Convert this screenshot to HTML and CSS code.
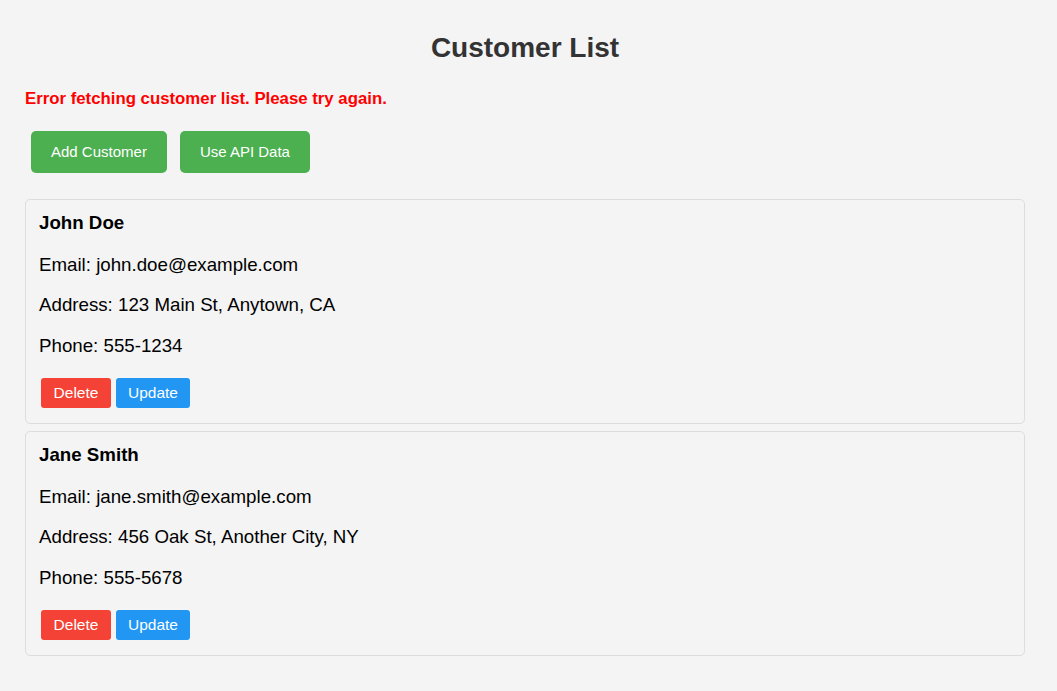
FILE: index.html
```html
<!DOCTYPE html>
<html lang="en">
<head>
<meta charset="utf-8">
<title>Customer List</title>
<link rel="stylesheet" href="styles.css">
</head>
<body>
<div class="app">
  <h1 class="title">Customer List</h1>
  <p class="error">Error fetching customer list. Please try again.</p>
  <div class="actions">
    <button class="btn btn-green">Add Customer</button>
    <button class="btn btn-green">Use API Data</button>
  </div>
  <ul class="list">
    <li class="card">
      <h3 class="name">John Doe</h3>
      <p class="field">Email: john.doe@example.com</p>
      <p class="field">Address: 123 Main St, Anytown, CA</p>
      <p class="field">Phone: 555-1234</p>
      <div class="card-actions">
        <button class="sbtn sbtn-red">Delete</button>
        <button class="sbtn sbtn-blue">Update</button>
      </div>
    </li>
    <li class="card">
      <h3 class="name">Jane Smith</h3>
      <p class="field">Email: jane.smith@example.com</p>
      <p class="field">Address: 456 Oak St, Another City, NY</p>
      <p class="field">Phone: 555-5678</p>
      <div class="card-actions">
        <button class="sbtn sbtn-red">Delete</button>
        <button class="sbtn sbtn-blue">Update</button>
      </div>
    </li>
  </ul>
</div>
</body>
</html>
```
FILE: styles.css
```css
html, body {
  margin: 0;
  padding: 0;
  background: #f4f4f4;
  font-family: "Liberation Sans", Arial, sans-serif;
  color: #000;
}

.app {
  width: 1000px;
  padding: 20px 25px;
}

.title {
  font-size: 28px;
  font-weight: bold;
  color: #333;
  text-align: center;
  margin: 12px 0 0;
  line-height: 32px;
}

.error {
  color: #ff0000;
  font-weight: bold;
  font-size: 16.8px;
  margin: 25px 0 0;
  line-height: 19px;
}

.actions {
  display: flex;
  gap: 13px;
  margin: 23px 0 0 6px;
}

.btn {
  font-family: "Liberation Sans", Arial, sans-serif;
  font-size: 15px;
  line-height: 18px;
  color: #fff;
  border: none;
  border-radius: 5px;
  padding: 12px 20px;
  cursor: pointer;
}

.btn-green {
  background: #4caf50;
}

.list {
  list-style: none;
  margin: 26px 0 0;
  padding: 0;
}

.card {
  border: 1px solid #ddd;
  border-radius: 5px;
  padding: 12px 13px;
  margin-bottom: 7px;
}

.name {
  font-size: 18.72px;
  font-weight: bold;
  margin: 0 0 19.72px;
}

.field {
  font-size: 18.72px;
  margin: 0 0 18.72px;
}

.card-actions {
  display: flex;
  gap: 5px;
  margin: 20.72px 0 3px 2px;
}

.sbtn {
  font-family: "Liberation Sans", Arial, sans-serif;
  font-size: 15.5px;
  line-height: 20px;
  color: #fff;
  border: none;
  border-radius: 3px;
  padding: 5px 12px;
  height: 30px;
  cursor: pointer;
}

.sbtn-red {
  background: #f44336;
  width: 70px;
}

.sbtn-blue {
  background: #2196f3;
}
```
